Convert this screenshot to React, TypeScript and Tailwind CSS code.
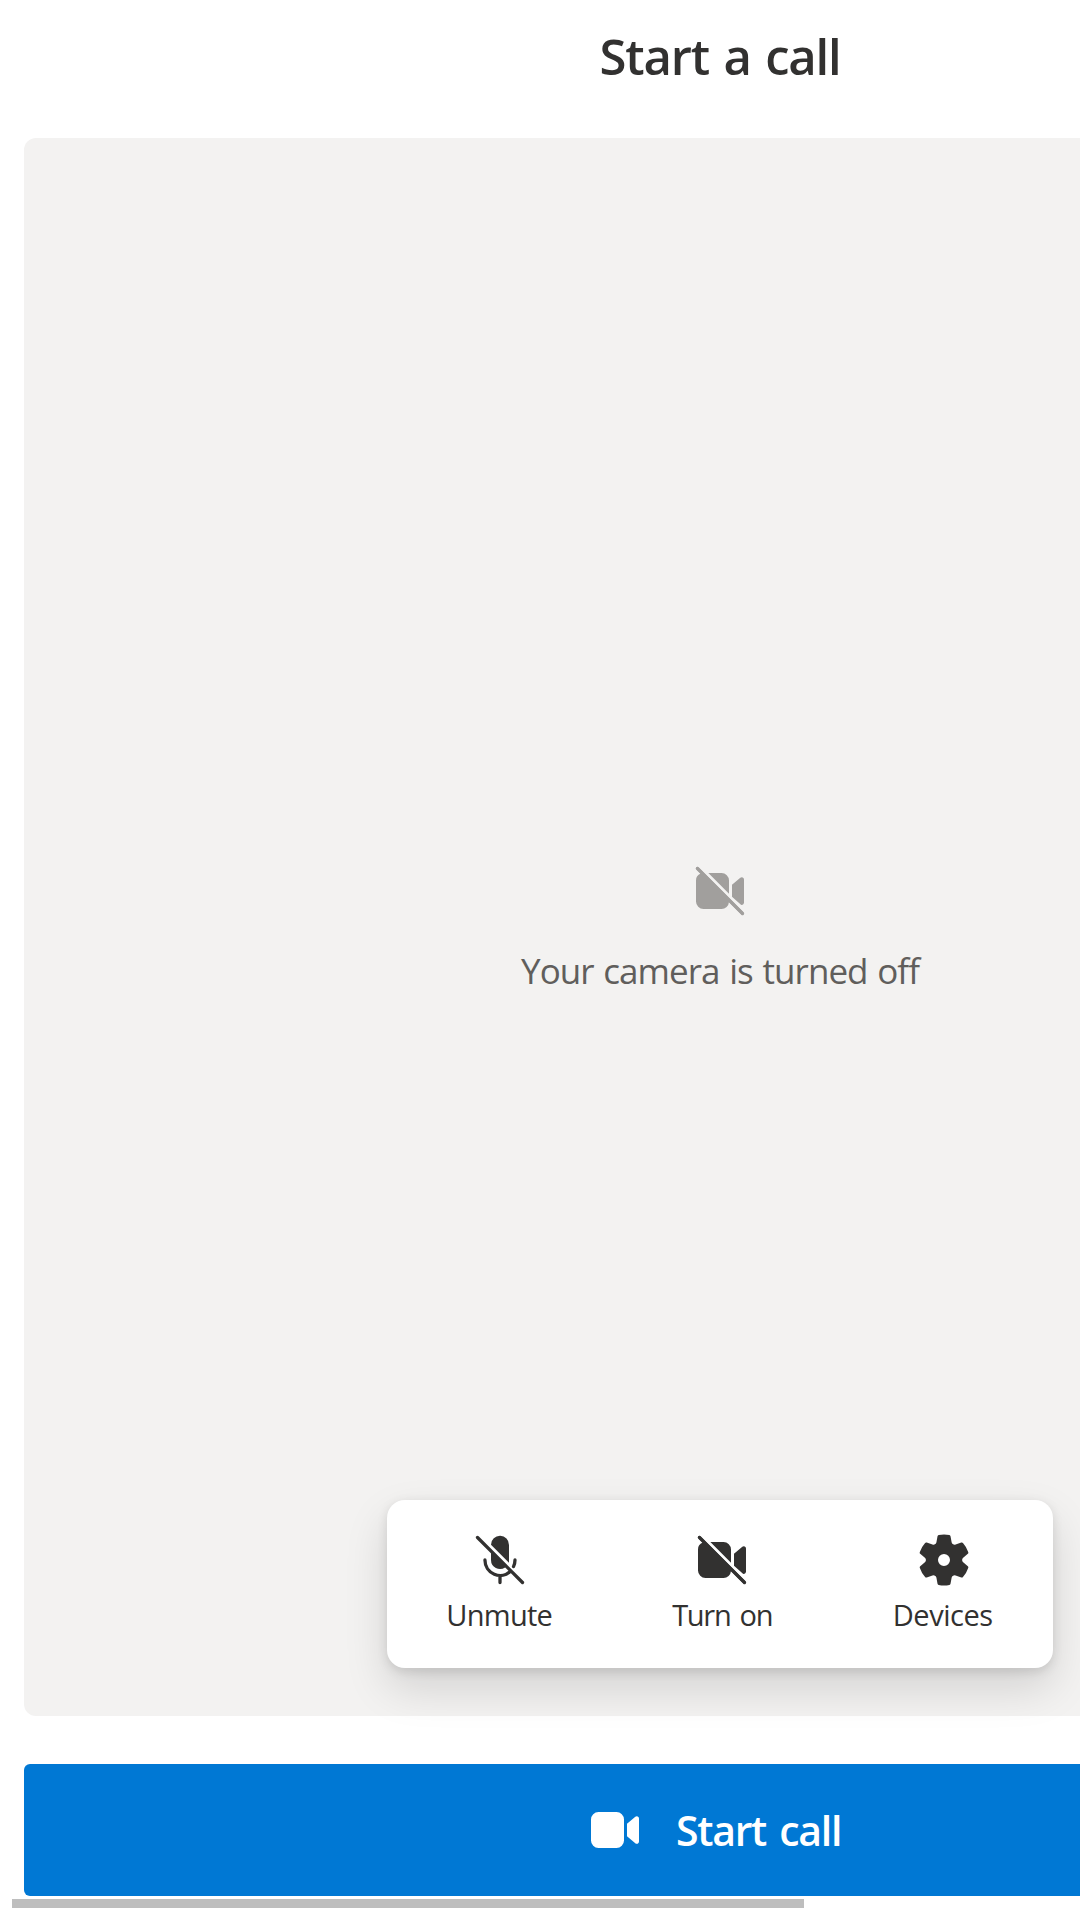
import type { ReactNode } from "react";

function Icon({ children }: { children: ReactNode }) {
  return (
    <svg viewBox="0 0 20 20" className="block size-[60px] shrink-0" fill="currentColor" aria-hidden="true">
      {children}
    </svg>
  );
}

function VideoIcon() {
  return (
    <Icon>
      <path d="M13 6.5A2.5 2.5 0 0 0 10.5 4h-6A2.5 2.5 0 0 0 2 6.5v7A2.5 2.5 0 0 0 4.5 16h6a2.5 2.5 0 0 0 2.5-2.5v-7Zm1 1.43v4.15l2.76 2.35a.75.75 0 0 0 1.24-.57V6.19a.75.75 0 0 0-1.23-.57L14 7.93Z" />
    </Icon>
  );
}

function VideoOffIcon() {
  return (
    <Icon>
      <path d="M2.85 2.15a.5.5 0 1 0-.7.7l1.4 1.34A2.5 2.5 0 0 0 2 6.5v7A2.5 2.5 0 0 0 4.5 16h6a2.5 2.5 0 0 0 2.5-2.3l4.15 4.15a.5.5 0 0 0 .7-.7l-15-15Z" />
      <path d="M2.5 2.5l15 15" stroke="currentColor" strokeWidth="1.1" strokeLinecap="round" />
      <path d="M13 10.88V6.5A2.5 2.5 0 0 0 10.5 4H6.12L13 10.88ZM14 7.93v3.95l2.99 2.7a.75.75 0 0 0 1.01-.72V6.19a.75.75 0 0 0-1.23-.57L14 7.93Z" />
    </Icon>
  );
}

function MicOffIcon() {
  return (
    <Icon>
      <path d="M13 10.88V5a3 3 0 0 0-6-.12l6 6ZM7 6.5V10a3 3 0 0 0 4.7 2.46L12.2 11.7 7 6.5Z" />
      <path
        d="M2.5 2.5l15 15M4.98 10a5.02 5.1 0 0 0 8.6 3.6M10 15.2v2.3M15 10a5 5 0 0 1-.5 2.2"
        fill="none"
        stroke="currentColor"
        strokeWidth="1.1"
        strokeLinecap="round"
      />
    </Icon>
  );
}

function SettingsIcon() {
  return (
    <Icon>
      <path d="M1.91 7.38A8.5 8.5 0 0 1 3.7 4.3a.5.5 0 0 1 .54-.13l1.92.68a1 1 0 0 0 1.32-.76l.36-2a.5.5 0 0 1 .4-.4 8.53 8.53 0 0 1 3.55 0c.2.04.35.2.38.4l.37 2a1 1 0 0 0 1.32.76l1.92-.68a.5.5 0 0 1 .54.13 8.5 8.5 0 0 1 1.78 3.08c.06.2 0 .4-.15.54l-1.56 1.32a1 1 0 0 0 0 1.52l1.56 1.32a.5.5 0 0 1 .15.54 8.5 8.5 0 0 1-1.78 3.08.5.5 0 0 1-.54.13l-1.92-.68a1 1 0 0 0-1.32.76l-.37 2a.5.5 0 0 1-.38.4 8.53 8.53 0 0 1-3.56 0 .5.5 0 0 1-.39-.4l-.36-2a1 1 0 0 0-1.32-.76l-1.92.68a.5.5 0 0 1-.54-.13 8.5 8.5 0 0 1-1.78-3.08.5.5 0 0 1 .15-.54l1.56-1.32a1 1 0 0 0 0-1.52L2.06 7.92a.5.5 0 0 1-.15-.54ZM8 10a2 2 0 1 0 4 0 2 2 0 0 0-4 0Z" />
    </Icon>
  );
}

function ControlButton({ icon, label, tracking }: { icon: ReactNode; label: string; tracking: string }) {
  return (
    <button className="flex w-[222px] shrink-0 flex-col items-center pt-[30px] text-[#323130]">
      {icon}
      <span className={`mt-[3px] text-[29px] leading-[44px] ${tracking}`}>{label}</span>
    </button>
  );
}

export default function App() {
  return (
    <main className="h-[1920px] w-full overflow-hidden bg-white font-['Open_Sans','Noto_Sans',sans-serif]">
      <div className="flex w-[1440px] flex-col px-6">
        <h1 className="flex h-[138px] items-start justify-center pt-[21px] text-[49px] leading-[70px] font-semibold tracking-[-1.2px] text-[#323130] [word-spacing:3px]">
          Start a call
        </h1>

        <section className="flex h-[1578px] flex-col rounded-xl bg-[#f3f2f1]">
          <div className="flex grow flex-col items-center pt-[723px]">
            <div className="text-[#a19f9d]">
              <VideoOffIcon />
            </div>
            <p className="mt-[23px] text-[35px] leading-[54px] tracking-[-0.95px] text-[#605e5c] [word-spacing:1.5px]">
              Your camera is turned off
            </p>
          </div>
          <div className="mr-[0.6px] mb-12 flex h-[168px] w-[666px] self-center rounded-[18px] bg-white pl-[2.5px] shadow-[0_19.2px_43.2px_rgba(0,0,0,0.132),0_3.6px_10.8px_rgba(0,0,0,0.108)]">
            <ControlButton icon={<MicOffIcon />} label="Unmute" tracking="tracking-[-0.7px] mr-[2px]" />
            <ControlButton icon={<VideoOffIcon />} label="Turn on" tracking="tracking-[-1.3px] [word-spacing:3px]" />
            <ControlButton icon={<SettingsIcon />} label="Devices" tracking="tracking-[-0.45px] mr-[3px]" />
          </div>
        </section>

        <button className="mt-12 flex h-[132px] items-center rounded-md bg-[#0078d4] pl-[561px] text-white">
          <VideoIcon />
          <span className="-mt-px ml-[31px] text-[41px] leading-[60px] font-semibold tracking-[-1.3px] [word-spacing:4px]">
            Start call
          </span>
        </button>
      </div>
      <div className="mt-[3px] ml-3 h-[9px] w-[792px] bg-[#bebebe]" />
    </main>
  );
}
